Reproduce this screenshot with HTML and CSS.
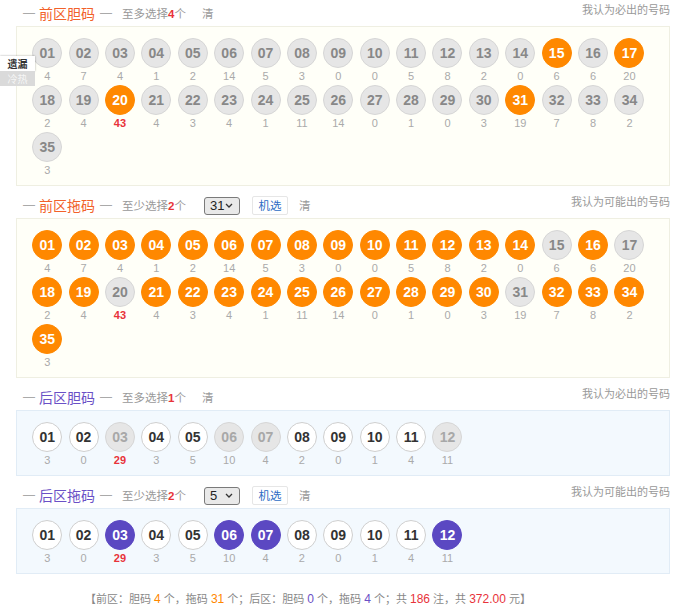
FILE: index.html
```html
<!DOCTYPE html>
<html lang="zh-CN">
  <head>
    <meta charset="UTF-8" />
    <meta name="viewport" content="width=device-width, initial-scale=1.0" />
    <title>大乐透胆拖投注</title>
    <link rel="stylesheet" href="styles.css">
  </head>
  <body>
    <div class="side">
      <span class="cur">遗漏</span>
      <span>冷热</span>
    </div>

    <div class="wrap">
      <div class="section">
        <div class="head">
          <em>—</em><h2 class="red">前区胆码</h2><em>—</em>
          <span class="tip">至多选择<b>4</b>个</span>
          <span class="clear">清</span>
          <span class="hint">我认为必出的号码</span>
        </div>
        <div class="balls front" id="frontDan"></div>
      </div>

      <div class="section">
        <div class="head">
          <em>—</em><h2 class="red">前区拖码</h2><em>—</em>
          <span class="tip">至少选择<b>2</b>个</span>
          <label class="pick">
            <select><option>31</option></select>
            <svg width="8" height="5" viewBox="0 0 8 5"><path d="M1 1l3 3 3-3" fill="none" stroke="#333" stroke-width="1.3"/></svg>
          </label>
          <button class="rand">机选</button>
          <span class="clear">清</span>
          <span class="hint">我认为可能出的号码</span>
        </div>
        <div class="balls front" id="frontTuo"></div>
      </div>

      <div class="section">
        <div class="head">
          <em>—</em><h2 class="blue">后区胆码</h2><em>—</em>
          <span class="tip">至多选择<b>1</b>个</span>
          <span class="clear">清</span>
          <span class="hint">我认为必出的号码</span>
        </div>
        <div class="balls back" id="backDan"></div>
      </div>

      <div class="section">
        <div class="head">
          <em>—</em><h2 class="blue">后区拖码</h2><em>—</em>
          <span class="tip">至少选择<b>2</b>个</span>
          <label class="pick">
            <select><option>5</option></select>
            <svg width="8" height="5" viewBox="0 0 8 5"><path d="M1 1l3 3 3-3" fill="none" stroke="#333" stroke-width="1.3"/></svg>
          </label>
          <button class="rand">机选</button>
          <span class="clear">清</span>
          <span class="hint">我认为可能出的号码</span>
        </div>
        <div class="balls back" id="backTuo"></div>
      </div>

      <p class="total">【前区：胆码 <span class="c-o">4</span> 个，拖码 <span class="c-o">31</span> 个；后区：胆码 <span class="c-p">0</span> 个，拖码 <span class="c-p">4</span> 个；共 <span class="c-r">186</span> 注，共 <span class="c-r">372.00</span> 元】</p>
    </div>

    <script>
      // 遗漏值
      const frontMiss = [4, 7, 4, 1, 2, 14, 5, 3, 0, 0, 5, 8, 2, 0, 6, 6, 20, 2, 4, 43, 4, 3, 4, 1, 11, 14, 0, 1, 0, 3, 19, 7, 8, 2, 3];
      const backMiss = [3, 0, 29, 3, 5, 10, 4, 2, 0, 1, 4, 11];
      const frontDan = [15, 17, 20, 31];
      const backTuo = [3, 6, 7, 12];

      function render(id, miss, getClass) {
        const max = Math.max(...miss);
        document.getElementById(id).innerHTML = miss
          .map((m, i) => {
            const n = i + 1;
            const num = n < 10 ? '0' + n : '' + n;
            return `<div class="cell"><span class="ball ${getClass(n)}">${num}</span><i class="${m === max ? 'hot' : ''}">${m}</i></div>`;
          })
          .join('');
      }

      render('frontDan', frontMiss, n => (frontDan.includes(n) ? 'on' : ''));
      render('frontTuo', frontMiss, n => (frontDan.includes(n) ? '' : 'on'));
      render('backDan', backMiss, n => (backTuo.includes(n) ? 'off' : 'white'));
      render('backTuo', backMiss, n => (backTuo.includes(n) ? 'purple' : 'white'));
    </script>
  </body>
</html>
```

FILE: styles.css
```css
* {
  margin: 0;
  padding: 0;
  box-sizing: border-box;
}
body {
  position: relative;
  width: 690px;
  font-family: "Liberation Sans", "Noto Sans CJK SC", sans-serif;
  color: #999;
  background: #fff;
}

.side {
  position: absolute;
  left: 0;
  top: 56px;
  width: 35px;
  font-size: 10px;
  font-family: "Noto Sans CJK SC", sans-serif;
  z-index: 2;
}
.side span {
  display: block;
  height: 15px;
  line-height: 15px;
  text-align: center;
  background: #dadada;
  color: #f6f6f6;
}
.side .cur {
  background: #fff;
  color: #333;
  font-weight: bold;
  box-shadow: 0 0 2px rgba(0, 0, 0, 0.35);
}

.wrap {
  width: 670px;
  padding-left: 16px;
}
.section + .section {
  margin-top: 6px;
}

.head {
  display: flex;
  align-items: center;
  height: 26px;
  padding-left: 7px;
}
.head em {
  font-style: normal;
  font-size: 12px;
  color: #aaa;
}
.head h2 {
  font-size: 14px;
  font-weight: normal;
  margin: 0 5px 0 4px;
  font-family: "Noto Sans CJK SC", sans-serif;
}
.head h2.red {
  color: #f2612a;
}
.head h2.blue {
  color: #6a50c6;
}
.tip {
  margin-left: 10px;
  font-size: 11.5px;
  color: #999;
  font-family: "Noto Sans CJK SC", sans-serif;
}
.tip b {
  color: #e8333a;
  font-family: "Liberation Sans", sans-serif;
}
.clear {
  margin-left: 16px;
  font-size: 11.5px;
  color: #999;
  font-family: "Noto Sans CJK SC", sans-serif;
}
.pick + .rand + .clear {
  margin-left: 11px;
}
.hint {
  margin-left: auto;
  align-self: flex-start;
  padding-top: 1px;
  font-size: 11px;
  color: #999;
  font-family: "Noto Sans CJK SC", sans-serif;
}

.pick {
  position: relative;
  margin-left: 18px;
  width: 36px;
  height: 18px;
}
.pick select {
  appearance: none;
  width: 36px;
  height: 18px;
  padding-left: 5px;
  font-size: 13px;
  font-family: "Liberation Sans", sans-serif;
  color: #222;
  background: #e9e9e9;
  border: 1px solid #7a7a7a;
  border-radius: 3px;
}
.pick svg {
  position: absolute;
  right: 7px;
  top: 7px;
  pointer-events: none;
}
.rand {
  margin-left: 12px;
  width: 36px;
  height: 19px;
  font-size: 11.5px;
  font-family: "Noto Sans CJK SC", sans-serif;
  color: #2c6cc4;
  background: #fff;
  border: 1px solid #e6e6e6;
  border-radius: 2px;
}

.balls {
  display: grid;
  grid-template-columns: repeat(17, 36.4px);
  padding: 11px 0 6px 12px;
  border: 1px solid #efefe2;
  background: #fffff8;
}
.balls.back {
  border-color: #e1ecf6;
  background: #f3f9fe;
}
.cell {
  height: 47px;
  text-align: center;
}
.ball {
  display: inline-block;
  width: 30px;
  height: 30px;
  line-height: 28px;
  border-radius: 50%;
  border: 1px solid #d6d6d6;
  background: #e6e6e6;
  color: #888;
  font-size: 14px;
  font-weight: bold;
}
.ball.on {
  background: #ff8800;
  border-color: #ff8800;
  color: #fff;
}
.ball.white {
  background: #fff;
  border-color: #cfcfcf;
  color: #333;
}
.ball.off {
  color: #a8a8a8;
}
.ball.purple {
  background: #5b48c2;
  border-color: #5b48c2;
  color: #fff;
}
.cell i {
  display: block;
  font-style: normal;
  font-size: 11px;
  line-height: 17px;
  color: #aaa;
}
.cell i.hot {
  color: #e8333a;
  font-weight: bold;
}

.total {
  padding: 17px 0 0 69px;
  font-size: 11px;
  line-height: 16px;
  color: #888;
  font-family: "Liberation Sans", "Noto Sans CJK SC", sans-serif;
}
.total span {
  font-size: 12px;
}
.c-o {
  color: #ff8800;
}
.c-p {
  color: #6a50c6;
}
.c-r {
  color: #e8333a;
}
```
